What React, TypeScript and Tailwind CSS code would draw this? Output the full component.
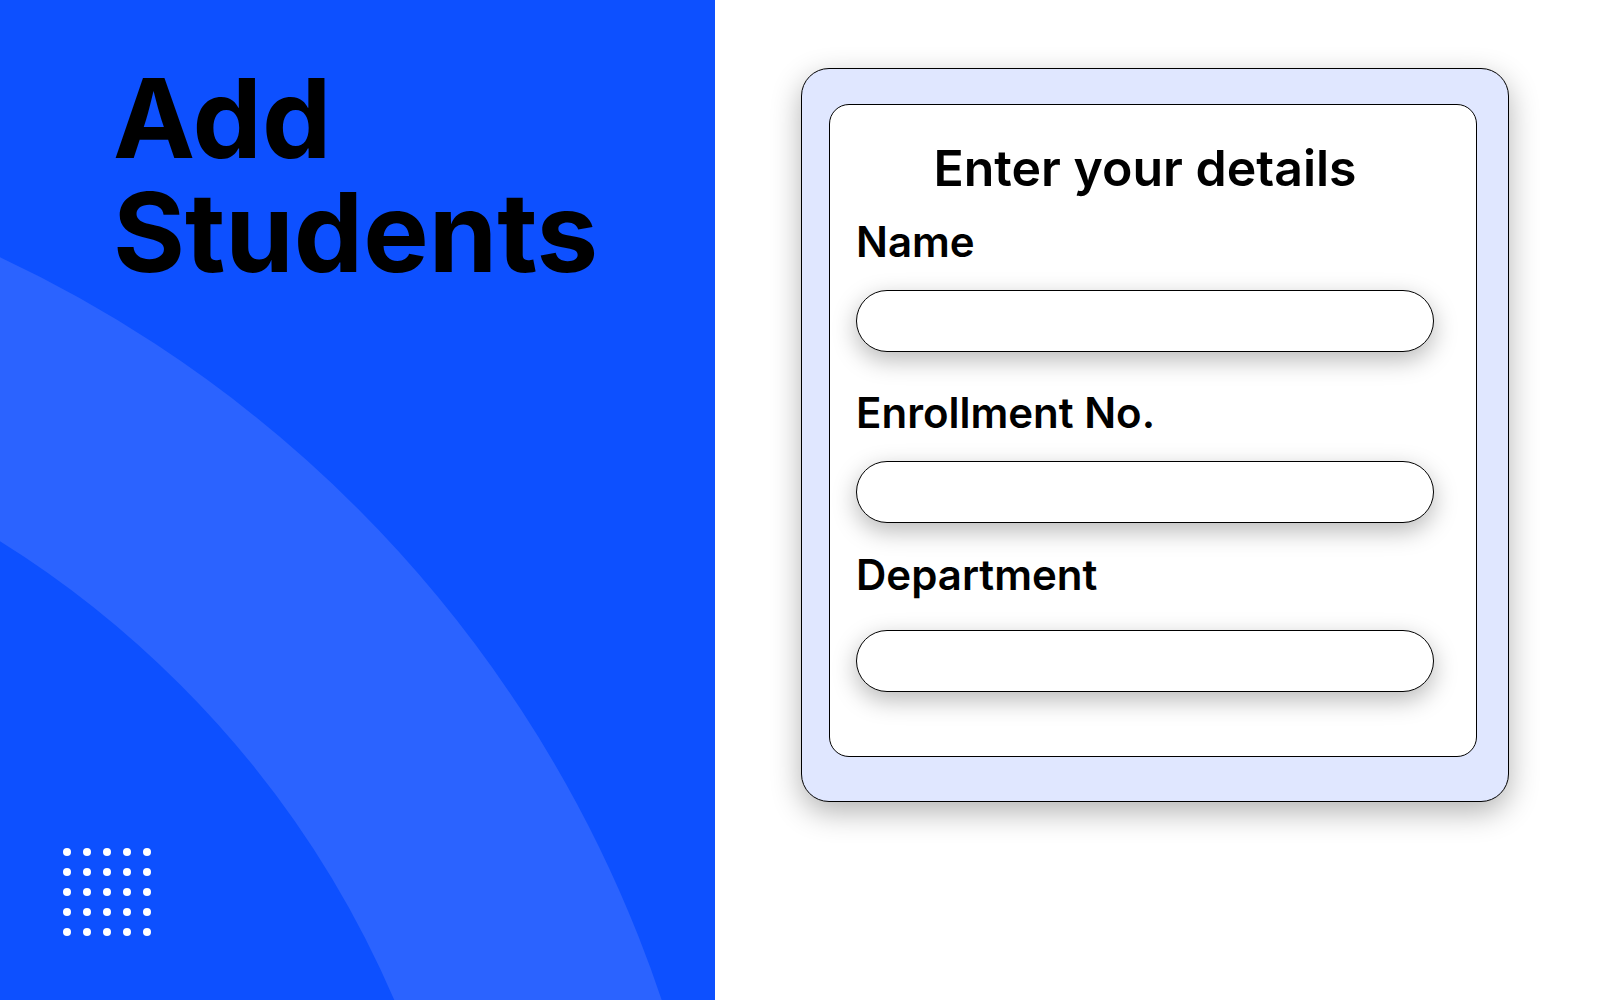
const fields = [
  { label: 'Name', top: '', gap: 'mt-[24px]' },
  { label: 'Enrollment No.', top: 'mt-[37px]', gap: 'mt-[24px]' },
  { label: 'Department', top: 'mt-[28px]', gap: 'mt-[31px]' },
];

export default function App() {
  const dots = Array.from({ length: 25 });

  return (
    <main className="flex h-screen w-full overflow-hidden bg-white font-['Inter',sans-serif] text-black">
      {/* Left blue panel */}
      <section className="relative flex h-full w-[715px] shrink-0 flex-col justify-between overflow-hidden bg-[#0d50ff]">
        <div className="pointer-events-none absolute left-[-1799px] top-[138px] h-[2526px] w-[2526px] rounded-full border-[250px] border-[#2b63ff]" />

        <h1 className="relative pl-[113px] pt-[61px] text-[110px] font-bold leading-[114px]">
          <span className="block">Add</span>
          <span className="block">Students</span>
        </h1>

        <div className="relative grid w-fit grid-cols-5 gap-[12px] pb-[64px] pl-[63px]">
          {dots.map((_, i) => (
            <span key={i} className="h-[8px] w-[8px] rounded-full bg-white" />
          ))}
        </div>
      </section>

      {/* Form side */}
      <section className="flex-1 pl-[86px] pt-[68px]">
        <div className="h-[734px] w-[708px] rounded-[28px] border border-black bg-[#e0e7ff] pl-[27px] pt-[35px] shadow-[0_10px_30px_rgba(0,0,0,0.3)]">
          <div className="h-[653px] w-[648px] rounded-[20px] border border-black bg-white pl-[26px] pt-[33px]">
            <div className="flex w-[578px] flex-col">
              <h2 className="mb-[20px] text-center text-[50px] font-semibold leading-[60px]">Enter your details</h2>

              {fields.map((f) => (
                <div key={f.label} className={f.top}>
                  <label className="block text-[42px] font-semibold leading-[48px]">{f.label}</label>
                  <input
                    type="text"
                    className={`${f.gap} block h-[62px] w-full rounded-full border border-black bg-white px-6 text-2xl shadow-[0_8px_24px_rgba(0,0,0,0.28)] outline-none`}
                  />
                </div>
              ))}
            </div>
          </div>
        </div>
      </section>
    </main>
  );
}
